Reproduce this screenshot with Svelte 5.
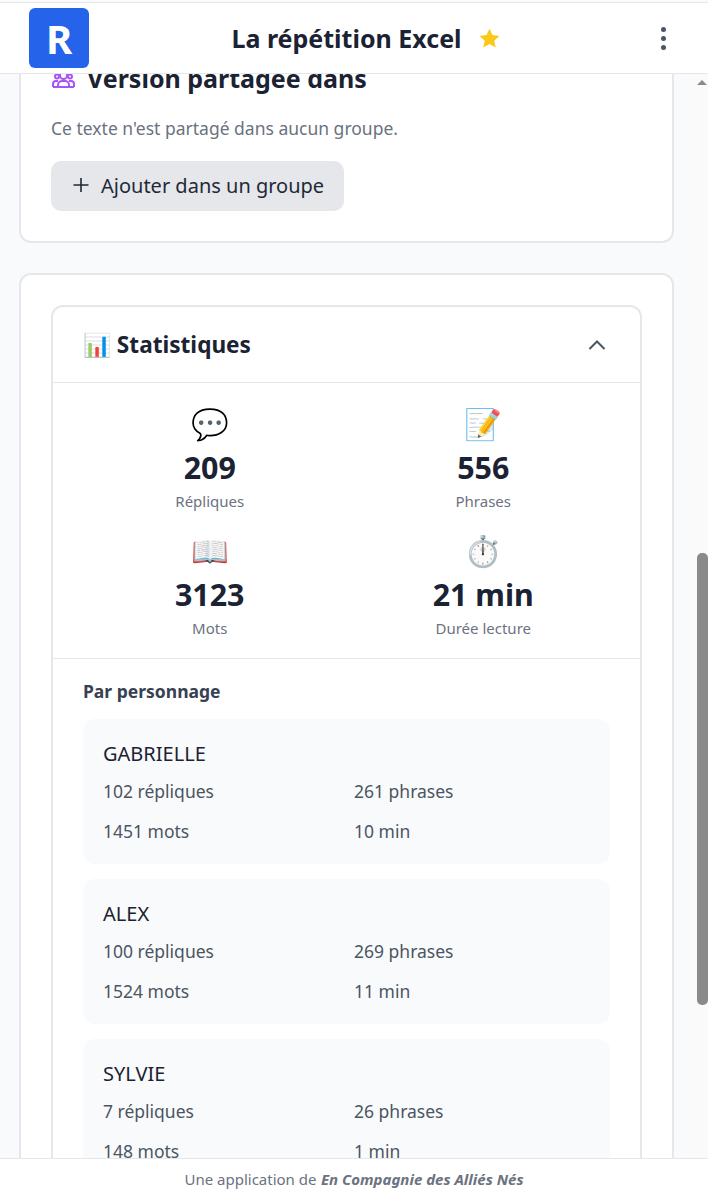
<script>
  const totals = [
    { icon: '💬', value: '209', label: 'Répliques' },
    { icon: '📝', value: '556', label: 'Phrases' },
    { icon: '📖', value: '3123', label: 'Mots' },
    { icon: '⏱️', value: '21 min', label: 'Durée lecture' },
  ];

  const characters = [
    { name: 'GABRIELLE', lines: 102, sentences: 261, words: 1451, time: 10 },
    { name: 'ALEX', lines: 100, sentences: 269, words: 1524, time: 11 },
    { name: 'SYLVIE', lines: 7, sentences: 26, words: 148, time: 1 },
  ];
</script>

<div class="page">
  <header class="topbar">
    <div class="logo">R</div>
    <div class="title">
      <h1>La répétition Excel</h1>
      <svg class="star" viewBox="0 0 24 24" aria-hidden="true">
        <path d="M12 1.8l3.1 6.6 7.2.9-5.3 5 1.4 7.1-6.4-3.6-6.4 3.6 1.4-7.1-5.3-5 7.2-.9z" />
      </svg>
    </div>
    <button class="menu" aria-label="Menu">
      <span></span><span></span><span></span>
    </button>
  </header>

  <main class="content">
    <div class="scroller">
      <section class="card shared">
        <h2>
          <svg class="group-icon" viewBox="0 0 24 22" aria-hidden="true">
            <circle cx="6" cy="10.5" r="2" />
            <circle cx="19" cy="10.5" r="2" />
            <circle cx="12.5" cy="9.5" r="3.5" />
            <path d="M7 21v-2a4 4 0 0 1 4-4h3a4 4 0 0 1 4 4v2M2 21v-3a3 3 0 0 1 3-3h2M23 21v-3a3 3 0 0 0-3-3h-2M2 21h21" />
          </svg>
          Version partagée dans
        </h2>
        <p>Ce texte n'est partagé dans aucun groupe.</p>
        <button class="add">
          <svg viewBox="0 0 16 16" aria-hidden="true"><path d="M8 1v14M.5 8h15" /></svg>
          Ajouter dans un groupe
        </button>
      </section>

      <section class="card">
        <div class="stats">
          <div class="stats-head">
            <h3>📊 Statistiques</h3>
            <svg viewBox="0 0 24 24" aria-hidden="true"><path d="M4.5 16l7.5-7.5 7.5 7.5" /></svg>
          </div>

          <div class="totals">
            {#each totals as t}
              <div class="total">
                <div class="emoji">{t.icon}</div>
                <div class="value">{t.value}</div>
                <div class="label">{t.label}</div>
              </div>
            {/each}
          </div>

          <div class="people">
            <h4>Par personnage</h4>
            {#each characters as c}
              <div class="person">
                <div class="name">{c.name}</div>
                <div class="figures">
                  <span>{c.lines} répliques</span>
                  <span>{c.sentences} phrases</span>
                  <span>{c.words} mots</span>
                  <span>{c.time} min</span>
                </div>
              </div>
            {/each}
          </div>
        </div>
      </section>
    </div>

    <div class="scrollbar">
      <div class="arrow"></div>
      <div class="thumb"></div>
    </div>
  </main>

  <footer class="foot">Une application de <b>En Compagnie des Alliés Nés</b></footer>
</div>

<style>
  :global(body) {
    margin: 0;
    font-family: 'Noto Sans', sans-serif;
    color: #1a2233;
  }

  .page {
    height: 100vh;
    display: flex;
    flex-direction: column;
    overflow: hidden;
    background: #f9fafb;
  }

  .topbar {
    flex: none;
    height: 72px;
    box-sizing: border-box;
    margin-top: 2px;
    border-top: 1px solid #e5e7eb;
    border-bottom: 1px solid #e5e7eb;
    background: #fff;
    display: flex;
    align-items: center;
    justify-content: space-between;
    padding: 0 29px;
    position: relative;
    z-index: 2;
  }

  .logo {
    width: 60px;
    height: 60px;
    border-radius: 6px;
    background: #2563eb;
    color: #fff;
    font-size: 40px;
    font-weight: 700;
    display: flex;
    align-items: center;
    justify-content: center;
  }

  .title {
    display: flex;
    align-items: center;
    gap: 16px;
    margin-right: 8px;
  }

  .title h1 {
    margin: 0;
    font-size: 25px;
    font-weight: 700;
    color: #1a2233;
  }

  .star {
    width: 23px;
    height: 23px;
    fill: #fbc91a;
  }

  .menu {
    width: 24px;
    height: 32px;
    margin-right: 4px;
    padding: 0;
    border: 0;
    background: none;
    display: flex;
    flex-direction: column;
    align-items: center;
    justify-content: center;
    gap: 4px;
  }

  .menu span {
    width: 5px;
    height: 5px;
    border-radius: 50%;
    background: #4b5563;
  }

  .content {
    flex: 1;
    min-height: 0;
    overflow: hidden;
    position: relative;
  }

  .scroller {
    padding: 0 34px 0 19px;
    display: flex;
    flex-direction: column;
    gap: 30px;
  }

  .card {
    background: #fff;
    border: 2px solid #e5e7eb;
    border-radius: 12px;
    padding: 30px;
  }

  .shared {
    margin-top: -45px;
    padding-bottom: 30px;
  }

  .shared h2 {
    margin: 0;
    font-size: 25px;
    font-weight: 700;
    display: flex;
    align-items: center;
    gap: 12px;
  }

  .group-icon {
    flex: none;
    width: 24px;
    height: 22px;
    margin-top: -2px;
    fill: none;
    stroke: #a855f7;
    stroke-width: 2;
  }

  .shared p {
    margin: 21px 0 21px;
    font-size: 17.5px;
    color: #6b7280;
  }

  .add {
    height: 50px;
    padding: 0 20px 2px 22px;
    border: 0;
    border-radius: 10px;
    background: #e5e7eb;
    color: #1f2937;
    font: 20px 'Noto Sans', sans-serif;
    display: flex;
    align-items: center;
    gap: 12px;
  }

  .add svg {
    width: 16px;
    height: 16px;
    fill: none;
    stroke: #1f2937;
    stroke-width: 1.6;
  }

  .stats {
    border: 2px solid #e5e7eb;
    border-radius: 12px;
  }

  .stats-head {
    height: 75px;
    padding: 0 31px 0 30px;
    border-bottom: 1px solid #e5e7eb;
    display: flex;
    align-items: center;
    justify-content: space-between;
  }

  .stats-head h3 {
    margin: 0;
    font-size: 22.6px;
    font-weight: 700;
  }

  .stats-head svg {
    width: 24px;
    height: 24px;
    fill: none;
    stroke: #4b5563;
    stroke-width: 2;
  }

  .totals {
    padding: 18px 31px 18px;
    display: grid;
    grid-template-columns: 1fr 1fr;
    column-gap: 22px;
    row-gap: 15px;
    border-bottom: 1px solid #e5e7eb;
  }

  .total {
    text-align: center;
  }

  .emoji {
    font-size: 30.4px;
    line-height: 46px;
  }

  .value {
    font-size: 30.4px;
    font-weight: 700;
    line-height: 42px;
  }

  .label {
    font-size: 15px;
    line-height: 24px;
    color: #6b7280;
  }

  .people {
    padding: 20px 30px 40px;
    display: flex;
    flex-direction: column;
    gap: 15px;
  }

  .people h4 {
    margin: 0 0 1px;
    font-size: 17.5px;
    font-weight: 700;
    color: #374151;
  }

  .person {
    padding: 20px 20px 21px;
    border-radius: 12px;
    background: #f9fafb;
  }

  .name {
    font-size: 20px;
    line-height: 30px;
    color: #1a2233;
  }

  .figures {
    margin-top: 10px;
    display: grid;
    grid-template-columns: 1fr 1fr;
    column-gap: 15px;
    row-gap: 16px;
    font-size: 17.5px;
    line-height: 24px;
    color: #4b5563;
  }

  .scrollbar {
    position: absolute;
    top: 0;
    right: 0;
    bottom: 0;
    width: 14px;
    background: #fafafb;
  }

  .arrow {
    position: absolute;
    top: 6px;
    left: 3px;
    border: 5px solid transparent;
    border-top: 0;
    border-bottom: 5px solid #8a8a8a;
  }

  .thumb {
    position: absolute;
    top: 479px;
    left: 3px;
    width: 11px;
    height: 452px;
    border-radius: 5px;
    background: #8a8a8a;
  }

  .foot {
    flex: none;
    height: 41px;
    box-sizing: border-box;
    border-top: 1px solid #e5e7eb;
    background: #fff;
    font-size: 15px;
    color: #6b7280;
    display: flex;
    align-items: center;
    justify-content: center;
    gap: 0.3em;
    position: relative;
    z-index: 2;
  }

  .foot b {
    font-style: italic;
    font-weight: 700;
  }
</style>
